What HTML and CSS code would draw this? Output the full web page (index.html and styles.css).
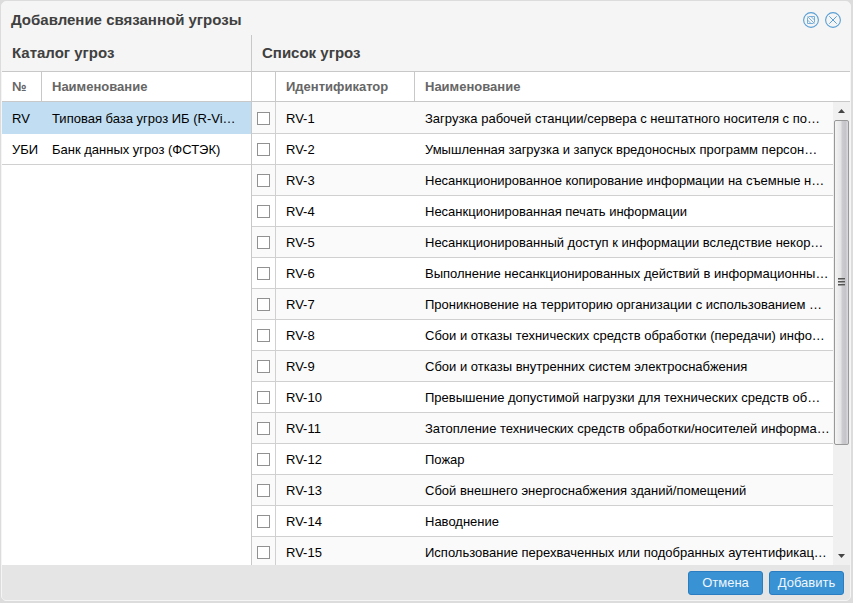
FILE: index.html
```html
<!DOCTYPE html>
<html lang="ru">
<head>
<meta charset="utf-8">
<title>Добавление связанной угрозы</title>
<link rel="stylesheet" href="styles.css">
</head>
<body>
<section class="dialog" role="dialog" aria-labelledby="dialog-title">
  <header class="titlebar">
    <h1 class="title" id="dialog-title">Добавление связанной угрозы</h1>
    <button class="tool" type="button" aria-label="Развернуть">
      <svg width="16" height="16" viewBox="0 0 16 16" fill="none" stroke="#5a9fd4"><circle cx="8" cy="8" r="7.4" stroke-width="1.1"/><path d="M4.5 5.5v6h6M5.5 4.5h6v6M4.5 4.5l7 7M8 4.5l3.5 3.5M4.5 8l3.5 3.5" stroke-width=".8"/></svg>
    </button>
    <button class="tool" type="button" aria-label="Закрыть">
      <svg width="16" height="16" viewBox="0 0 16 16" fill="none" stroke="#5a9fd4"><circle cx="8" cy="8" r="7.4" stroke-width="1.1"/><path d="M4.3 4.3l7.4 7.4M11.7 4.3l-7.4 7.4" stroke-width="1"/></svg>
    </button>
  </header>
  <div class="panels">
    <section class="panel catalog">
      <h2 class="panel-title">Каталог угроз</h2>
      <div class="grid">
        <table class="table">
          <colgroup><col class="col-num"><col></colgroup>
          <thead><tr><th>№</th><th>Наименование</th></tr></thead>
          <tbody>
            <tr class="selected"><td>RV</td><td>Типовая база угроз ИБ (R-Vi…</td></tr>
            <tr><td>УБИ</td><td>Банк данных угроз (ФСТЭК)</td></tr>
          </tbody>
        </table>
      </div>
    </section>
    <section class="panel threats">
      <h2 class="panel-title">Список угроз</h2>
      <div class="grid">
        <table class="table striped">
          <colgroup><col class="col-check"><col class="col-id"><col></colgroup>
          <thead><tr><th></th><th>Идентификатор</th><th>Наименование</th></tr></thead>
          <tbody>
            <tr><td class="check"><input type="checkbox" aria-label="RV-1"></td><td>RV-1</td><td>Загрузка рабочей станции/сервера с нештатного носителя с по…</td></tr>
            <tr><td class="check"><input type="checkbox" aria-label="RV-2"></td><td>RV-2</td><td>Умышленная загрузка и запуск вредоносных программ персон…</td></tr>
            <tr><td class="check"><input type="checkbox" aria-label="RV-3"></td><td>RV-3</td><td>Несанкционированное копирование информации на съемные н…</td></tr>
            <tr><td class="check"><input type="checkbox" aria-label="RV-4"></td><td>RV-4</td><td>Несанкционированная печать информации</td></tr>
            <tr><td class="check"><input type="checkbox" aria-label="RV-5"></td><td>RV-5</td><td>Несанкционированный доступ к информации вследствие некор…</td></tr>
            <tr><td class="check"><input type="checkbox" aria-label="RV-6"></td><td>RV-6</td><td>Выполнение несанкционированных действий в информационны…</td></tr>
            <tr><td class="check"><input type="checkbox" aria-label="RV-7"></td><td>RV-7</td><td>Проникновение на территорию организации с использованием …</td></tr>
            <tr><td class="check"><input type="checkbox" aria-label="RV-8"></td><td>RV-8</td><td>Сбои и отказы технических средств обработки (передачи) инфо…</td></tr>
            <tr><td class="check"><input type="checkbox" aria-label="RV-9"></td><td>RV-9</td><td>Сбои и отказы внутренних систем электроснабжения</td></tr>
            <tr><td class="check"><input type="checkbox" aria-label="RV-10"></td><td>RV-10</td><td>Превышение допустимой нагрузки для технических средств об…</td></tr>
            <tr><td class="check"><input type="checkbox" aria-label="RV-11"></td><td>RV-11</td><td>Затопление технических средств обработки/носителей информа…</td></tr>
            <tr><td class="check"><input type="checkbox" aria-label="RV-12"></td><td>RV-12</td><td>Пожар</td></tr>
            <tr><td class="check"><input type="checkbox" aria-label="RV-13"></td><td>RV-13</td><td>Сбой внешнего энергоснабжения зданий/помещений</td></tr>
            <tr><td class="check"><input type="checkbox" aria-label="RV-14"></td><td>RV-14</td><td>Наводнение</td></tr>
            <tr><td class="check"><input type="checkbox" aria-label="RV-15"></td><td>RV-15</td><td>Использование перехваченных или подобранных аутентификац…</td></tr>
          </tbody>
        </table>
        <div class="side" aria-hidden="true">
          <div class="side-head"></div>
          <div class="scrollbar">
            <div class="arrow"><svg width="7" height="4" viewBox="0 0 7 4"><path d="M0 4L3.5 0 7 4z" fill="#444"/></svg></div>
            <div class="track">
              <div class="thumb"><span></span><span></span><span></span></div>
            </div>
            <div class="arrow"><svg width="7" height="4" viewBox="0 0 7 4"><path d="M0 0L3.5 4 7 0z" fill="#444"/></svg></div>
          </div>
        </div>
      </div>
    </section>
  </div>
  <footer class="footer">
    <button class="button" type="button">Отмена</button>
    <button class="button" type="button">Добавить</button>
  </footer>
</section>
</body>
</html>
```
FILE: styles.css
```css
* {
  box-sizing: border-box;
}

body {
  margin: 0;
  height: 100vh;
  padding: 1px 2px 2px 1px;
  overflow: hidden;
  background: #dcdcdc;
  font: 13px/16px "Liberation Sans", Arial, sans-serif;
  color: #000;
}

.dialog {
  display: flex;
  flex-direction: column;
  height: 100%;
  border: 1px solid #f5f5f5;
  border-radius: 5px;
  overflow: hidden;
  background: #f5f5f5;
}

.titlebar {
  display: flex;
  align-items: center;
  gap: 6px;
  flex: none;
  height: 33px;
  padding: 3px 9px 0;
}

.title,
.panel-title {
  margin: 0;
  font-size: 15px;
  line-height: 18px;
  font-weight: bold;
  color: #404040;
}

.title {
  flex: 1;
}

.tool {
  width: 16px;
  height: 16px;
  padding: 0;
  border: 0;
  background: none;
}

.tool svg {
  display: block;
}

.panels {
  display: flex;
  flex: 1;
  min-height: 0;
}

.panel {
  display: flex;
  flex-direction: column;
  min-width: 0;
}

.catalog {
  flex: 0 0 250px;
  border-right: 1px solid #c8c8c8;
}

.threats {
  flex: 1;
}

.panel-title {
  flex: none;
  height: 37px;
  padding: 9px 10px;
  border-bottom: 1px solid #c8c8c8;
}

.grid {
  display: flex;
  align-items: flex-start;
  flex: 1;
  min-height: 0;
  overflow: hidden;
  background: #fff;
}

.table {
  flex: 1;
  min-width: 0;
  width: 100%;
  table-layout: fixed;
  border-collapse: separate;
  border-spacing: 0;
}

.col-num {
  width: 40px;
}

.col-check {
  width: 24px;
}

.col-id {
  width: 139px;
}

th,
td {
  height: 31px;
  padding: 2px 0 0 10px;
  border-bottom: 1px solid #d0d0d0;
  text-align: left;
  white-space: nowrap;
  overflow: hidden;
}

th {
  height: 30px;
  padding-top: 0;
  border-right: 1px solid #c8c8c8;
  border-bottom-color: #c8c8c8;
  color: #666;
}

th:last-child {
  border-right: 0;
}

tbody tr:first-child td {
  height: 32px;
}

.striped tbody tr:nth-child(odd) {
  background: #fafafa;
}

.selected td {
  background: #c1ddf1;
  border-bottom-color: #c1ddf1;
}

.check {
  padding: 1px 0 0 5px;
  border-right: 1px solid #d0d0d0;
}

.check input {
  appearance: none;
  display: block;
  width: 13px;
  height: 13px;
  margin: 0;
  border: 1px solid #919191;
  background: #fff;
}

.side {
  display: flex;
  flex-direction: column;
  align-self: stretch;
  flex: 0 0 17px;
}

.side-head {
  flex: none;
  height: 30px;
  border-bottom: 1px solid #c8c8c8;
}

.scrollbar {
  display: flex;
  flex-direction: column;
  flex: 1;
  min-height: 0;
  background: #f0f0f0;
}

.arrow {
  display: flex;
  align-items: center;
  justify-content: center;
  flex: none;
  height: 18px;
}

.track {
  flex: 1;
  min-height: 0;
}

.thumb {
  display: flex;
  flex-direction: column;
  align-items: center;
  justify-content: center;
  gap: 1px;
  width: 15px;
  height: 76%;
  margin: 0 auto;
  border: 1px solid #989898;
  border-radius: 2px;
  background: linear-gradient(90deg, #f4f4f4, #e4e4e6 45%, #cdcdd1 55%, #c4c4c9 80%, #dcdce0);
}

.thumb span {
  width: 7px;
  height: 2px;
  border-top: 1px solid #555;
  background: #999;
}

.footer {
  display: flex;
  align-items: center;
  justify-content: flex-end;
  gap: 6px;
  flex: none;
  height: 35px;
  padding: 0 6px;
  background: #e5e5e5;
}

.button {
  width: 75px;
  height: 24px;
  padding: 0;
  border: 1px solid #2a7dc0;
  border-radius: 3px;
  background: #3892d4;
  color: #f0f6fb;
  font: 13px/16px "Liberation Sans", Arial, sans-serif;
}
```
